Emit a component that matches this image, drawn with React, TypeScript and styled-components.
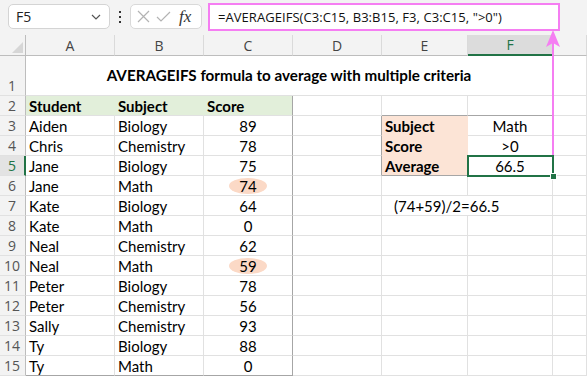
import React from "react";
import styled, { createGlobalStyle } from "styled-components";

const GlobalStyle = createGlobalStyle`
  html, body { margin: 0; padding: 0; background: #fff; }
  body { font-family: Lato, "Liberation Sans", sans-serif; }
`;

const GREEN = "#217346";
const PINK = "#f57ef2";
const GRID = "#e1e1e1";
const EDGE = "#a6a6a6";
const PEACH = "#fce4d6";

const Frame = styled.div`
  position: relative;
  width: 587px;
  height: 376px;
  overflow: hidden;
  background: #fff;
`;

const Toolbar = styled.div`
  display: flex;
  align-items: flex-start;
  height: 35px;
  padding: 4px 0 0 8px;
  box-sizing: border-box;
  background: #f3f3f3;
`;

const NameBox = styled.div`
  display: flex;
  align-items: center;
  justify-content: space-between;
  width: 102px;
  height: 25px;
  padding: 0 8px 0 7px;
  box-sizing: border-box;
  background: #fff;
  border: 1px solid #d4d4d4;
  border-radius: 5px;
  font-family: "Open Sans", sans-serif;
  font-size: 14px;
  color: #222;
`;

const Dots = styled.div`
  display: flex;
  flex-direction: column;
  gap: 3px;
  margin: 7px 9px 0 9px;
  span {
    width: 2px;
    height: 2px;
    background: #333;
  }
`;

const FxBox = styled.div`
  display: flex;
  align-items: center;
  gap: 6px;
  width: 72px;
  height: 25px;
  padding: 0 0 0 6px;
  box-sizing: border-box;
  background: #fff;
  border: 1px solid #d9d9d9;
  border-radius: 5px;
`;

const Fx = styled.span`
  font-family: "Liberation Serif", serif;
  font-style: italic;
  font-size: 17px;
  color: #333;
  margin-left: 2px;
`;

const FormulaBox = styled.div`
  display: flex;
  align-items: center;
  width: 352px;
  height: 28px;
  margin: -1px 0 0 6px;
  padding-left: 8px;
  box-sizing: border-box;
  background: #fff;
  border: 2px solid ${PINK};
  font-family: "Open Sans", sans-serif;
  font-size: 13px;
  letter-spacing: 0.05px;
  color: #111;
  white-space: nowrap;
`;

const Sheet = styled.div`
  display: grid;
  grid-template-columns: 26px 89px 89px 89px 89px 86px 85px 1fr;
  grid-template-rows: 21px 40px repeat(14, 20px);
`;

const Corner = styled.div`
  position: relative;
  background: #f3f3f3;
  border-right: 1px solid #bdbdbd;
  border-bottom: 1px solid #bdbdbd;
  &::after {
    content: "";
    position: absolute;
    right: 2px;
    bottom: 2px;
    width: 11px;
    height: 11px;
    background: #d6d6d6;
    clip-path: polygon(100% 0, 100% 100%, 0 100%);
  }
`;

const ColHead = styled.div<{ $active?: boolean }>`
  display: flex;
  align-items: center;
  justify-content: center;
  box-sizing: border-box;
  background: ${(p) => (p.$active ? "#dcdcdc" : "#f3f3f3")};
  border-right: 1px solid ${(p) => (p.$active ? "#dcdcdc" : "#dadada")};
  border-bottom: ${(p) => (p.$active ? `2px solid ${GREEN}` : "1px solid #bdbdbd")};
  font-family: "Open Sans", sans-serif;
  font-size: 14px;
  color: ${(p) => (p.$active ? GREEN : "#444")};
`;

const RowHead = styled.div<{ $active?: boolean; $bottom?: boolean }>`
  display: flex;
  align-items: ${(p) => (p.$bottom ? "flex-end" : "center")};
  justify-content: center;
  box-sizing: border-box;
  background: ${(p) => (p.$active ? "#e3e3e3" : "#f3f3f3")};
  border-right: ${(p) => (p.$active ? `2px solid ${GREEN}` : "1px solid #bdbdbd")};
  border-bottom: 1px solid ${GRID};
  font-family: "Open Sans", sans-serif;
  font-size: 14px;
  color: ${(p) => (p.$active ? GREEN : "#555")};
  padding-right: ${(p) => (p.$active ? "0" : "1px")};
`;

type CellProps = {
  $center?: boolean;
  $bold?: boolean;
  $fill?: string;
  $right?: string;
  $under?: string;
  $span?: number;
  $indent?: number;
};

const Cell = styled.div<CellProps>`
  display: flex;
  align-items: center;
  justify-content: ${(p) => (p.$center ? "center" : "flex-start")};
  grid-column: ${(p) => (p.$span ? `span ${p.$span}` : "auto")};
  box-sizing: border-box;
  padding: 0 3px 0 ${(p) => 3 + (p.$indent || 0)}px;
  background: ${(p) => p.$fill || "#fff"};
  border-right: 1px solid ${(p) => p.$right || GRID};
  border-bottom: 1px solid ${(p) => p.$under || GRID};
  font-size: 15px;
  font-weight: ${(p) => (p.$bold ? 700 : 400)};
  color: #000;
  white-space: nowrap;
`;

const Title = styled(Cell)`
  padding-bottom: 2px;
  font-size: 15.2px;
`;

const Selected = styled(Cell)`
  position: relative;
  z-index: 2;
  &::after {
    content: "";
    position: absolute;
    top: -1px;
    left: -1px;
    right: -2px;
    bottom: -2px;
    border: 2px solid ${GREEN};
  }
  &::before {
    content: "";
    position: absolute;
    right: -5px;
    bottom: -5px;
    width: 5px;
    height: 5px;
    background: ${GREEN};
    border: 1px solid #fff;
    z-index: 3;
  }
`;

const Oval = styled.span`
  display: flex;
  align-items: center;
  justify-content: center;
  width: 38px;
  height: 16px;
  border-radius: 50%;
  background: #fbd9c6;
`;

const Arrow = styled.svg`
  position: absolute;
  left: 540px;
  top: 26px;
  width: 30px;
  height: 132px;
  z-index: 5;
`;

const rows: [string, string, number, boolean?][] = [
  ["Aiden", "Biology", 89],
  ["Chris", "Chemistry", 78],
  ["Jane", "Biology", 75],
  ["Jane", "Math", 74, true],
  ["Kate", "Biology", 64],
  ["Kate", "Math", 0],
  ["Neal", "Chemistry", 62],
  ["Neal", "Math", 59, true],
  ["Peter", "Biology", 78],
  ["Peter", "Chemistry", 56],
  ["Sally", "Chemistry", 93],
  ["Ty", "Biology", 88],
  ["Ty", "Math", 0],
];

const criteria: [string, string][] = [
  ["Subject", "Math"],
  ["Score", ">0"],
  ["Average", "66.5"],
];

export default function App() {
  return (
    <Frame>
      <GlobalStyle />
      <Toolbar>
        <NameBox>
          <span>F5</span>
          <svg width="10" height="6" viewBox="0 0 10 6">
            <polyline points="1,1 5,5 9,1" fill="none" stroke="#555" strokeWidth="1.2" />
          </svg>
        </NameBox>
        <Dots>
          <span />
          <span />
          <span />
        </Dots>
        <FxBox>
          <svg width="13" height="13" viewBox="0 0 13 13">
            <path d="M1 1 L12 12 M12 1 L1 12" stroke="#b3b3b3" strokeWidth="1.2" />
          </svg>
          <svg width="15" height="11" viewBox="0 0 15 11">
            <polyline points="1,6 5,10 14,1" fill="none" stroke="#b3b3b3" strokeWidth="1.2" />
          </svg>
          <Fx>fx</Fx>
        </FxBox>
        <FormulaBox>=AVERAGEIFS(C3:C15, B3:B15, F3, C3:C15, "&gt;0")</FormulaBox>
      </Toolbar>

      <Sheet>
        <Corner />
        {["A", "B", "C", "D", "E", "F", ""].map((c) => (
          <ColHead key={c} $active={c === "F"}>
            {c}
          </ColHead>
        ))}

        <RowHead $bottom>1</RowHead>
        <Title $span={6} $center $bold>
          AVERAGEIFS formula to average with multiple criteria
        </Title>
        <Cell />

        <RowHead>2</RowHead>
        <Cell $bold $fill="#e2efda" $right="#e2efda">Student</Cell>
        <Cell $bold $fill="#e2efda" $right="#e2efda">Subject</Cell>
        <Cell $bold $fill="#e2efda" $right={EDGE}>Score</Cell>
        <Cell />
        <Cell $under={EDGE} />
        <Cell $under={EDGE} />
        <Cell />

        {rows.map(([name, subj, score, mark], i) => {
          const r = i + 3;
          const last = r === 15;
          const crit = r >= 3 && r <= 5 ? criteria[r - 3] : null;
          return (
            <React.Fragment key={r}>
              <RowHead $active={r === 5}>{r}</RowHead>
              <Cell $under={last ? EDGE : GRID}>{name}</Cell>
              <Cell $under={last ? EDGE : GRID}>{subj}</Cell>
              <Cell $center $right={EDGE} $under={last ? EDGE : GRID}>
                {mark ? <Oval>{score}</Oval> : score}
              </Cell>
              <Cell $right={crit ? EDGE : GRID} />
              {crit ? (
                <>
                  <Cell $bold $fill={PEACH} $right={PEACH} $under={r === 5 ? EDGE : PEACH}>
                    {crit[0]}
                  </Cell>
                  {r === 5 ? (
                    <Selected $center $under={EDGE}>
                      {crit[1]}
                    </Selected>
                  ) : (
                    <Cell $center>{crit[1]}</Cell>
                  )}
                </>
              ) : r === 7 ? (
                <Cell $span={2} $indent={9}>
                  (74+59)/2=66.5
                </Cell>
              ) : (
                <>
                  <Cell />
                  <Cell />
                </>
              )}
              <Cell />
            </React.Fragment>
          );
        })}
      </Sheet>

      <Arrow viewBox="0 0 30 132">
        <line x1="13" y1="14" x2="13" y2="129" stroke={PINK} strokeWidth="2" />
        <polygon points="13,4 6,21 13,17 20,21" fill={PINK} />
      </Arrow>
    </Frame>
  );
}
